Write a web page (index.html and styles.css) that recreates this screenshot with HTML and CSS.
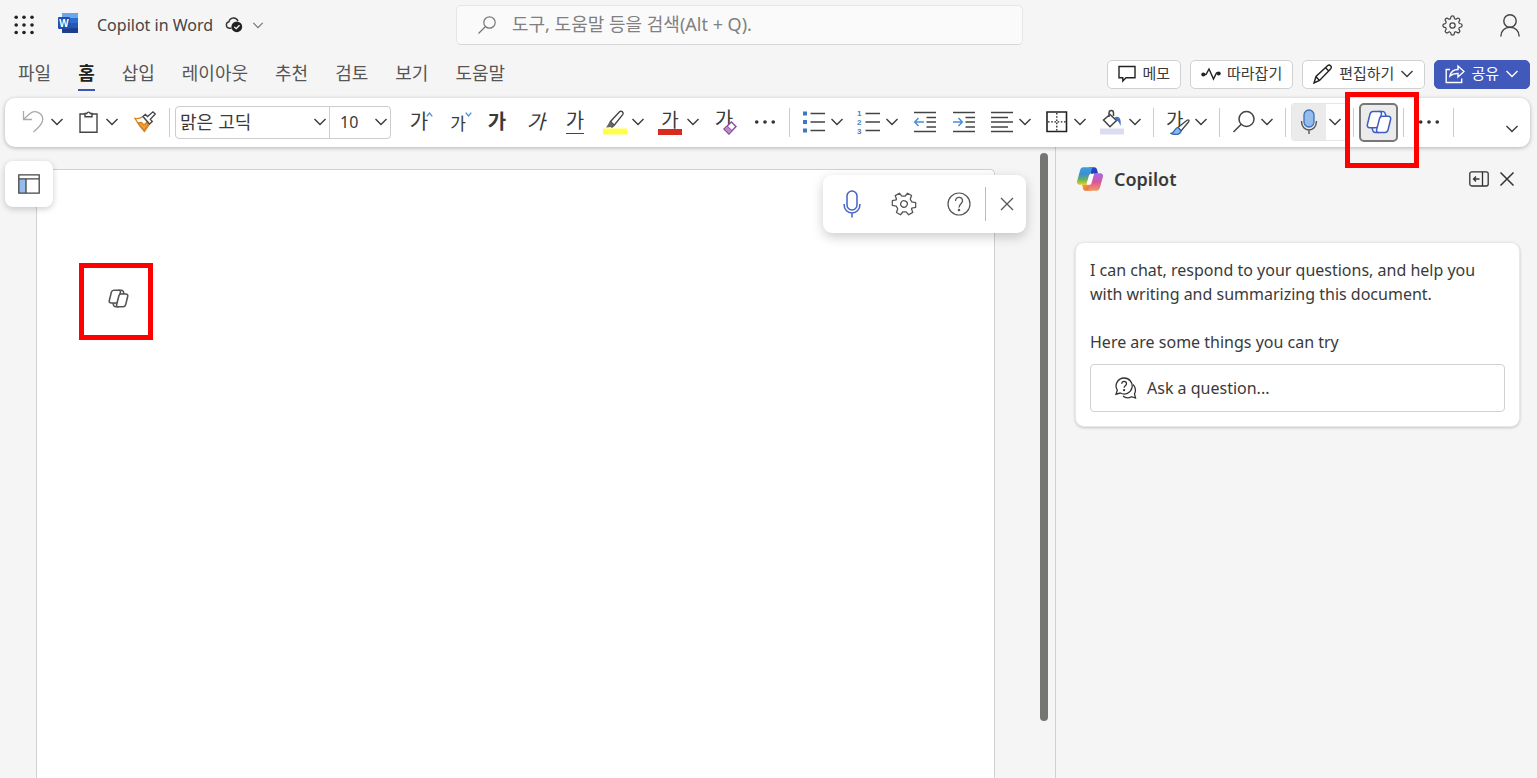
FILE: index.html
```html
<!DOCTYPE html>
<html lang="ko">
<head>
<meta charset="utf-8">
<title>Copilot in Word</title>
<link rel="stylesheet" href="styles.css">
</head>
<body>
<svg class="defs" aria-hidden="true">
  <defs>
    <symbol id="chev" viewBox="0 0 14 10"><path d="M1.500 2 7 7.500 12.500 2" fill="none" stroke="currentColor" stroke-width="1.400"/></symbol>
    <symbol id="dots" viewBox="0 0 24 24"><g fill="#333"><circle cx="3" cy="12" r="2"/><circle cx="12" cy="12" r="2"/><circle cx="21" cy="12" r="2"/></g></symbol>
    <symbol id="copilot" viewBox="0 0 26 24">
      <path class="fold" d="M13.500 1.500h3.300c1.300 0 2 .8 2.400 2l.8 3-6.500 1z"/>
      <path class="fold" d="M12.500 22.500H9.200c-1.300 0-2-.8-2.400-2l-.8-3 6.500-1z"/>
      <path class="leaf" d="M7 1.500h6.500c1.700 0 2.300 1 1.900 2.600l-2.900 11.300c-.4 1.500-1.300 2.300-2.800 2.300H3.800c-2 0-2.900-1.300-2.400-3.200L4 4c.5-1.700 1.500-2.500 3-2.500z"/>
      <path class="leaf" d="M19 22.500h-6.500c-1.700 0-2.300-1-1.900-2.600l2.900-11.300c.4-1.500 1.300-2.300 2.800-2.300h5.900c2 0 2.900 1.300 2.400 3.200L22 20c-.5 1.700-1.500 2.500-3 2.500z"/>
    </symbol>
    <linearGradient id="cg1" x1="0" y1="0" x2="0" y2="1"><stop offset="0" stop-color="#3aa0e0"/><stop offset=".4" stop-color="#3c8fcf"/><stop offset=".72" stop-color="#6db357"/><stop offset="1" stop-color="#e8cf2c"/></linearGradient>
    <linearGradient id="cg2" x1="0" y1="0" x2="0" y2="1"><stop offset="0" stop-color="#a56be8"/><stop offset=".5" stop-color="#d9569f"/><stop offset="1" stop-color="#f59a5a"/></linearGradient>
    <linearGradient id="cg3" x1="0" y1="0" x2="1" y2="1"><stop offset="0" stop-color="#2a4fd0"/><stop offset="1" stop-color="#2536b0"/></linearGradient>
    <linearGradient id="cg4" x1="0" y1="0" x2="1" y2="1"><stop offset="0" stop-color="#f2b33a"/><stop offset="1" stop-color="#e8603c"/></linearGradient>
  </defs>
</svg>

<header class="titlebar">
  <div class="title-left">
    <button class="plain" aria-label="앱 시작 관리자"><svg width="20" height="20" viewBox="0 0 20 20"><g fill="#222"><circle cx="2.200" cy="2.200" r="1.800"/><circle cx="10" cy="2.200" r="1.800"/><circle cx="18" cy="2.200" r="1.800"/><circle cx="2.200" cy="10" r="1.800"/><circle cx="10" cy="10" r="1.800"/><circle cx="18" cy="10" r="1.800"/><circle cx="2.200" cy="17.500" r="1.800"/><circle cx="10" cy="17.500" r="1.800"/><circle cx="18" cy="17.500" r="1.800"/></g></svg></button>
    <svg class="word-logo" width="20" height="20" viewBox="0 0 20 20"><rect x="4" width="16" height="20" rx="1" fill="#2b6cd0"/><path d="M4 1a1 1 0 0 1 1-1h14a1 1 0 0 1 1 1v4H4z" fill="#6aa5ee"/><path d="M4 10h16v5H4z" fill="#2557b5"/><path d="M4 15h16v4a1 1 0 0 1-1 1H5a1 1 0 0 1-1-1z" fill="#1c3e8c"/><rect y="4" width="12" height="12" rx="1" fill="#2450a8"/><text x="6" y="14" text-anchor="middle" class="word-w">W</text></svg>
    <h1 class="doc-name">Copilot in Word</h1>
    <svg width="18" height="16" viewBox="0 0 18 16"><path d="M6.500 11.200H4.200a3.300 3.300 0 0 1-.2-6.500 4.700 4.700 0 0 1 9-.7" fill="none" stroke="#333" stroke-width="1.400"/><circle cx="11.800" cy="9.800" r="5.400" fill="#222"/><path d="m9.300 9.900 1.900 1.800 3.300-3.500" fill="none" stroke="#fff" stroke-width="1.300"/></svg>
    <button class="plain title-chev" aria-label="문서 메뉴"><svg width="12" height="9"><use href="#chev"/></svg></button>
  </div>
  <label class="search">
    <svg width="18" height="18" viewBox="0 0 18 18" fill="none" stroke="#777" stroke-width="1.200"><circle cx="11.500" cy="6.500" r="5.700"/><path d="m7.500 10.500-7 7"/></svg>
    <input type="text" placeholder="도구, 도움말 등을 검색(Alt + Q)." aria-label="검색">
  </label>
  <div class="title-right">
    <button class="plain" aria-label="설정"><svg width="21" height="21" viewBox="0 0 24 24" fill="none" stroke="#444" stroke-width="1.400"><circle cx="12" cy="12" r="3"/><path d="M19.400 15a1.650 1.650 0 0 0 .33 1.820l.06.06a2 2 0 0 1-2.830 2.830l-.06-.06a1.650 1.650 0 0 0-1.820-.33 1.650 1.650 0 0 0-1 1.510V21a2 2 0 0 1-4 0v-.09A1.650 1.650 0 0 0 9 19.400a1.650 1.650 0 0 0-1.820.33l-.06.06a2 2 0 0 1-2.830-2.830l.06-.06a1.650 1.650 0 0 0 .33-1.820 1.650 1.650 0 0 0-1.510-1H3a2 2 0 0 1 0-4h.09A1.650 1.650 0 0 0 4.600 9a1.650 1.650 0 0 0-.33-1.820l-.06-.06a2 2 0 0 1 2.830-2.830l.06.06a1.650 1.650 0 0 0 1.820.33H9a1.650 1.650 0 0 0 1-1.510V3a2 2 0 0 1 4 0v.09a1.650 1.650 0 0 0 1 1.510 1.650 1.650 0 0 0 1.820-.33l.06-.06a2 2 0 0 1 2.830 2.830l-.06.06a1.650 1.650 0 0 0-.33 1.820V9a1.650 1.650 0 0 0 1.510 1H21a2 2 0 0 1 0 4h-.09a1.650 1.650 0 0 0-1.510 1z"/></svg></button>
    <button class="plain" aria-label="계정"><svg width="20" height="23" viewBox="0 0 20 23" fill="none" stroke="#444" stroke-width="1.400"><circle cx="10" cy="7" r="6.200"/><path d="M.8 22.500c0-5.500 4-9.200 9.200-9.200s9.200 3.700 9.200 9.200"/></svg></button>
  </div>
</header>

<div class="tabrow">
  <nav class="tabs">
    <a href="#">파일</a><a href="#" class="active">홈</a><a href="#">삽입</a><a href="#">레이아웃</a><a href="#">추천</a><a href="#">검토</a><a href="#">보기</a><a href="#">도움말</a>
  </nav>
  <div class="actions">
    <button class="action"><svg width="18" height="18" viewBox="0 0 18 18"><path d="M1 1.500h16v11.200H8L4.800 16v-3.300H1z" fill="none" stroke="#222" stroke-width="1.400"/></svg><span>메모</span></button>
    <button class="action"><svg width="20" height="14" viewBox="0 0 20 14"><path d="M2 7.500h3L8 2l4.500 10L15.500 6H18" fill="none" stroke="#222" stroke-width="1.400"/><circle cx="2.300" cy="7.500" r="2" fill="#222"/><circle cx="17.700" cy="6.500" r="2" fill="#222"/></svg><span>따라잡기</span></button>
    <button class="action"><svg width="20" height="20" viewBox="0 0 20 20" fill="none" stroke="#222" stroke-width="1.400"><path d="m1 19 2-6.500L14.500 1.800c1-.9 2.200-.9 3.100 0s.9 2.100 0 3.100L6.500 16.500zM12.500 3.700l3.300 3.400M3 12.700l3.500 3.700"/></svg><span>편집하기</span><svg width="14" height="10"><use href="#chev"/></svg></button>
    <button class="action share"><svg width="20" height="20" viewBox="0 0 20 20" fill="none" stroke="#fff" stroke-width="1.400"><path d="M5 5.500H1.200v13h15.500v-4M5 12c.8-4 3.500-6.500 8-6.500V2l6 5.500-6 5.500V9.500c-3.500-.2-6 .7-8 2.500z"/></svg><span>공유</span><svg width="14" height="10"><use href="#chev"/></svg></button>
  </div>
</div>

<div class="ribbon">
  <button class="split" aria-label="실행 취소"><svg width="24" height="24" viewBox="0 0 24 24"><path d="M1.500 1v8.500H10M1.700 9.300 8 3.500c5-4.200 14.500 0 12.300 8C19.500 14.500 15 19 11.500 22" fill="none" stroke="#aaa" stroke-width="1.300"/></svg><svg width="14" height="10"><use href="#chev"/></svg></button>
  <button class="split" aria-label="붙여넣기"><svg width="24" height="24" viewBox="0 0 24 24" fill="none" stroke="#444" stroke-width="1.400"><path d="M8 4H3v18.300h17V4h-5"/><path d="M8 6.800V3.500h1.800a1.800 1.800 0 0 1 3.500 0H15v3.300z"/></svg><svg width="14" height="10"><use href="#chev"/></svg></button>
  <button class="tool" aria-label="서식 복사"><svg width="24" height="24" viewBox="0 0 24 24" fill="none" stroke-width="1.300"><path d="M2 8.500c3.500.8 5.500-.2 8-2l6.500 7.500L11.500 21.500C8 18 4.500 13 2 8.500z" stroke="#d5821f" fill="#fff"/><path d="m5 13 3.500-.6L11 15l2.500-2.500 1.500 2-4 6z" fill="#efa23c" stroke="#d5821f"/><path d="m10 6.500 2.300-2.200 2.200 2.200L20 1.800 22.300 4l-5 5.300 2 2.200-2.800 2.500z" stroke="#444" fill="#fff"/></svg></button>
  <span class="sep"></span>
  <div class="combo">
    <label class="pick font"><select aria-label="글꼴"><option>맑은 고딕</option></select><svg width="14" height="10"><use href="#chev"/></svg></label>
    <label class="pick size"><select aria-label="글꼴 크기"><option>10</option></select><svg width="14" height="10"><use href="#chev"/></svg></label>
  </div>
  <button class="tool glyph" aria-label="글꼴 크게"><span>가</span><svg class="caret" width="7" height="5" viewBox="0 0 7 5"><path d="M.7 4.300 3.500 1l2.800 3.300" fill="none" stroke="#4a8fd8" stroke-width="1.300"/></svg></button>
  <button class="tool glyph small" aria-label="글꼴 작게"><span>가</span><svg class="caret" width="7" height="5" viewBox="0 0 7 5"><path d="M.7.700 3.500 4 6.300.7" fill="none" stroke="#4a8fd8" stroke-width="1.300"/></svg></button>
  <button class="tool glyph bold" aria-label="굵게">가</button>
  <button class="tool glyph" aria-label="기울임꼴"><i>가</i></button>
  <button class="tool glyph" aria-label="밑줄"><span class="under">가</span></button>
  <button class="split" aria-label="강조 색"><svg width="24" height="26" viewBox="0 0 24 26"><path d="m7.500 12.500 9-9.700c2-1.700 4.700.7 3.200 2.900l-8.500 10.500zM7.500 12.500l-1.300 3L9 18l2.200-1.800" fill="none" stroke="#444" stroke-width="1.400"/><path d="m7 12.500 4.300 3.800L9 18l-6 .5z" fill="#666"/><path d="M0 19.500h24v6H0z" fill="#ffff4a"/></svg><svg width="14" height="10"><use href="#chev"/></svg></button>
  <button class="split" aria-label="글꼴 색"><span class="fontcolor">가</span><svg width="14" height="10"><use href="#chev"/></svg></button>
  <button class="tool glyph clear" aria-label="서식 지우기"><span>가</span><svg class="eraser" width="14" height="14" viewBox="0 0 14 14"><path d="M8.500 1 13 5.500l-7 7.500-5-5z" fill="#fff" stroke="#8a4a9e" stroke-width="1.400"/><path d="m4 4.800 5.200 5L6 13 1 8z" fill="#b98ac6" stroke="#8a4a9e"/></svg></button>
  <button class="tool" aria-label="더 보기"><svg width="22" height="22"><use href="#dots"/></svg></button>
  <span class="sep"></span>
  <button class="split" aria-label="글머리 기호"><svg width="24" height="24" viewBox="0 0 24 24"><path d="M8.500 3.500H23M8.500 12H23M8.500 20.500H23" stroke="#444" stroke-width="1.500"/><path d="M1 1.500h4v4H1zM1 10h4v4H1zM1 18.500h4v4H1z" fill="#3f78c0"/></svg><svg width="14" height="10"><use href="#chev"/></svg></button>
  <button class="split" aria-label="번호 매기기"><svg class="numbered" width="24" height="24" viewBox="0 0 24 24"><path d="M8.500 3.500H23M8.500 12H23M8.500 20.500H23" stroke="#444" stroke-width="1.500"/><g class="nums"><text x="0" y="6">1</text><text x="0" y="15">2</text><text x="0" y="24">3</text></g></svg><svg width="14" height="10"><use href="#chev"/></svg></button>
  <button class="tool" aria-label="내어쓰기"><svg width="24" height="24" viewBox="0 0 24 24" fill="none" stroke="#444" stroke-width="1.500"><path d="M1 2.500h22M13.500 7.500H23M13.500 12H23M13.500 17H23M1 21.500h22"/><path d="M11 12H2M5.500 8 1.700 12l3.800 4" stroke="#4a90d9"/></svg></button>
  <button class="tool" aria-label="들여쓰기"><svg width="24" height="24" viewBox="0 0 24 24" fill="none" stroke="#444" stroke-width="1.500"><path d="M1 2.500h22M13.500 7.500H23M13.500 12H23M13.500 17H23M1 21.500h22"/><path d="M1 12h9M6.500 8l3.800 4-3.800 4" stroke="#4a90d9"/></svg></button>
  <button class="split" aria-label="맞춤"><svg width="24" height="24" viewBox="0 0 24 24"><path d="M1 2.500h22M1 7.500h17M1 12h22M1 17h17M1 21.500h22" stroke="#444" stroke-width="1.500"/></svg><svg width="14" height="10"><use href="#chev"/></svg></button>
  <button class="split" aria-label="테두리"><svg width="24" height="24" viewBox="0 0 24 24" fill="none" stroke="#222"><path d="M2 2h19.500v19.500H2z" stroke-width="1.600"/><path d="M3 11.800h18M11.800 3v18" stroke-width="1.300" stroke-dasharray="1.600 1.600"/></svg><svg width="14" height="10"><use href="#chev"/></svg></button>
  <button class="split" aria-label="음영"><svg width="24" height="26" viewBox="0 0 24 26"><path d="M0 19.500h24v6H0z" fill="#dcdcf0"/><path d="M9 8V4c0-3.500 4.500-3.500 4.500 0v3M10 5.500l6.500 6-6.500 6.300L3.500 11z" fill="none" stroke="#444" stroke-width="1.500"/><path d="M14.500 8.500c4-2.200 7.300 1 6 8.500-1.300-3.300-2-5-4-5.500z" fill="#3f72c8"/></svg><svg width="14" height="10"><use href="#chev"/></svg></button>
  <span class="sep"></span>
  <button class="split" aria-label="스타일"><span class="style-glyph">가<svg class="brush" width="20" height="16" viewBox="0 0 20 16"><path d="m8 8.500 9-7.300c1.500-.8 2.700.3 1.500 1.800L11 12z" fill="#fff" stroke="#444" stroke-width="1.300"/><path d="M8 8.300c-3 0-2.500 4.700-7 6 4 2 9.500 1.500 10-2.300z" fill="#8db8e8" stroke="#2e69b5" stroke-width="1.300"/></svg></span><svg width="14" height="10"><use href="#chev"/></svg></button>
  <span class="sep"></span>
  <button class="split" aria-label="찾기"><svg width="24" height="24" viewBox="0 0 24 24" fill="none" stroke="#444" stroke-width="1.500"><circle cx="14.500" cy="9" r="7.500"/><path d="M9.200 14.300 1.500 22"/></svg><svg width="14" height="10"><use href="#chev"/></svg></button>
  <span class="sep"></span>
  <div class="mic-split">
    <button class="mic" aria-label="받아쓰기"><svg width="18" height="26" viewBox="0 0 18 26"><rect x="4" y="1" width="10" height="17" rx="5" fill="#94bdec" stroke="#3f6fb8" stroke-width="1.300"/><path d="M1.500 12c0 12 15 12 15 0M9 21v4" fill="none" stroke="#555" stroke-width="1.400"/></svg></button>
    <button class="mic-more" aria-label="받아쓰기 옵션"><svg width="14" height="10"><use href="#chev"/></svg></button>
  </div>
  <span class="sep"></span>
  <div class="copilot-slot">
    <button class="copilot-btn" aria-label="Copilot"><svg width="26" height="24"><use href="#copilot"/></svg></button>
    <span class="marker"></span>
  </div>
  <span class="sep"></span>
  <button class="tool" aria-label="기타 옵션"><svg width="22" height="22"><use href="#dots"/></svg></button>
  <span class="sep"></span>
  <button class="plain collapse" aria-label="리본 축소"><svg width="14" height="10"><use href="#chev"/></svg></button>
</div>

<main class="workspace">
  <section class="canvas">
    <button class="nav-toggle" aria-label="탐색"><svg width="22" height="20" viewBox="0 0 22 20"><path d="M1 1h20v18H1z" fill="#fff"/><path d="M1 5h7v14H1z" fill="#94bdec"/><path d="M.8.800h20.400v18.400H.8zM1 4.800h20M8 5v14" fill="none" stroke="#444" stroke-width="1.300"/></svg></button>
    <article class="page">
      <div class="prompt"><svg width="21" height="19"><use href="#copilot"/></svg></div>
    </article>
    <div class="scroll-thumb"></div>
    <div class="dictation">
      <button class="plain" aria-label="마이크"><svg width="18" height="28" viewBox="0 0 18 28" fill="none" stroke="#4461c8" stroke-width="1.500"><rect x="4" y="1" width="10" height="19" rx="5"/><path d="M1 14c0 12 16 12 16 0M9 23v4.500"/></svg></button>
      <button class="plain" aria-label="받아쓰기 설정"><svg width="28" height="28" viewBox="0 0 24 24" fill="none" stroke="#555" stroke-width="1.100"><g transform="rotate(30 12 12)"><circle cx="12" cy="12" r="2.800"/><path d="M10 2.500h4l.6 3.300 2.300 1.300 3.200-1.100 2 3.500-2.500 2.200v.6l2.500 2.200-2 3.500-3.200-1.100-2.300 1.300-.6 3.300h-4l-.6-3.300-2.300-1.300L3.900 18l-2-3.500 2.500-2.200v-.6L1.900 9.500l2-3.500 3.200 1.100 2.300-1.300z" stroke-linejoin="round"/></g></svg></button>
      <button class="plain" aria-label="도움말"><svg width="24" height="24" viewBox="0 0 24 24" fill="none" stroke="#555" stroke-width="1.200"><circle cx="12" cy="12" r="11"/><path d="M8.500 9c0-4.800 7-4.800 7 0 0 2.700-3.500 3-3.500 6.500" stroke-width="1.300"/><circle cx="12" cy="18" r=".7" fill="#555"/></svg></button>
      <span class="dict-sep"></span>
      <button class="plain" aria-label="닫기"><svg width="14" height="14" viewBox="0 0 14 14"><path d="m1 1 12 12M13 1 1 13" stroke="#555" stroke-width="1.300"/></svg></button>
    </div>
  </section>

  <aside class="pane">
    <div class="pane-head">
      <svg width="28" height="26" viewBox="0 0 26 24"><path d="M12 1h5c1.300 0 2 .8 2.400 2l1 3.700-6 2z" fill="url(#cg3)"/><path d="M14 23H9c-1.300 0-2-.8-2.400-2l-1-3.700 6-2z" fill="url(#cg4)"/><path d="M6.800 1H15l-3.500 13.700c-.4 1.700-1.300 2.600-2.800 2.600H3.500c-2 0-3-1.300-2.500-3.200L3.800 3.800C4.300 1.900 5.300 1 6.800 1z" fill="url(#cg1)"/><path d="M19.200 23H11l3.500-13.700c.4-1.700 1.300-2.600 2.800-2.600h5.200c2 0 3 1.300 2.500 3.200l-2.800 10.300c-.5 1.900-1.500 2.800-3 2.800z" fill="url(#cg2)"/><path d="M14.500 7.200h2.300l-2.300 8.200c-.4 1.300-1 1.900-2.100 1.900h-2.900l2.300-7.800c.5-1.600 1.300-2.300 2.700-2.300z" fill="#fff"/></svg>
      <h2>Copilot</h2>
      <button class="plain" aria-label="창 확장"><svg width="20" height="16" viewBox="0 0 20 16" fill="none" stroke="#333" stroke-width="1.300"><rect x=".8" y=".8" width="18.400" height="14.200" rx="2"/><path d="M13.500 1v14M10.500 8H5M7 5.500 4.500 8 7 10.500"/></svg></button>
      <button class="plain" aria-label="닫기"><svg width="16" height="16" viewBox="0 0 16 16"><path d="m1.500 1.500 13 13M14.500 1.500l-13 13" stroke="#333" stroke-width="1.500"/></svg></button>
    </div>
    <div class="card">
      <p>I can chat, respond to your questions, and help you with writing and summarizing this document.</p>
      <p>Here are some things you can try</p>
      <button class="ask"><svg width="22" height="22" viewBox="0 0 22 22" fill="none" stroke="#333" stroke-width="1.300"><path d="M9 1a8 8 0 1 1-3.700 15L1 17.200l1.300-4A8 8 0 0 1 9 1z"/><path d="M6.700 6.800c0-3.300 4.800-3.300 4.800 0 0 1.900-2.400 2-2.400 4"/><circle cx="9.100" cy="13.200" r=".5"/><path d="M8 19c2.500 2.200 6 2.200 8.500.7l4 1.300-1-4.200c1.700-3 1-7-1.500-9.300"/></svg>Ask a question...</button>
    </div>
  </aside>
</main>
</body>
</html>
```
FILE: styles.css
```css
* { box-sizing: border-box; }

body {
  margin: 0;
  height: 100vh;
  display: flex;
  flex-direction: column;
  overflow: hidden;
  background: #f5f5f5;
  color: #3a3a3a;
  font-family: "Noto Sans", "Noto Sans CJK KR", sans-serif;
  font-size: 16px;
}

.defs { position: absolute; width: 0; height: 0; }

button, input, select { font-family: inherit; color: inherit; }
button { cursor: pointer; }
svg { display: block; flex: none; }

.plain {
  display: flex;
  padding: 0;
  border: 0;
  background: none;
}

/* Title bar */
.titlebar {
  display: grid;
  grid-template-columns: 456px minmax(0, 567px) 1fr;
  align-items: center;
  height: 50px;
}
.title-left { display: flex; align-items: center; padding-left: 14px; }
.word-logo { margin-left: 24px; margin-bottom: 4px; }
.word-w { font: bold 10px "Liberation Sans", sans-serif; fill: #fff; }
.doc-name { margin: 0 12px 0 19px; font-size: 16px; font-weight: 400; color: #444; }
.title-chev { margin-left: 9px; color: #777; }
.search {
  display: flex;
  align-items: center;
  gap: 16px;
  height: 40px;
  padding: 0 21px;
  border: 1px solid #e6e6e6;
  border-bottom-color: #d6d6d6;
  border-radius: 5px;
  background: #fafafa;
}
.search input {
  flex: 1;
  min-width: 0;
  padding: 0 0 2px;
  border: 0;
  outline: 0;
  background: none;
  font-size: 18px;
}
.search input::placeholder { color: #808080; opacity: 1; }
.title-right { display: flex; justify-content: flex-end; align-items: center; gap: 37px; padding-right: 17px; }

/* Tabs and document actions */
.tabrow {
  display: flex;
  justify-content: space-between;
  align-items: center;
  height: 48px;
  padding: 0 7px 0 18px;
}
.tabs { display: flex; gap: 27px; }
.tabs a {
  height: 34px;
  border-bottom: 2px solid transparent;
  color: #555;
  font-family: "Noto Sans CJK KR", sans-serif;
  font-size: 18px;
  line-height: 30px;
  text-decoration: none;
}
.tabs .active { border-color: #3d55b5; color: #222; font-weight: 700; }
.actions { display: flex; gap: 9px; }
.action {
  display: flex;
  align-items: center;
  gap: 6px;
  height: 29px;
  padding: 0 10px;
  border: 1px solid #d1d1d1;
  border-radius: 5px;
  background: #fff;
  font-family: "Noto Sans CJK KR", sans-serif;
  font-size: 15px;
}
.action span { padding-bottom: 3px; }
.share { border-color: #4059bb; background: #4059bb; color: #fff; }

/* Ribbon */
.ribbon {
  display: flex;
  align-items: center;
  height: 49px;
  margin: 0 7px 0 5px;
  padding: 0 11px 1px 10px;
  border-radius: 10px;
  background: #fff;
  box-shadow: 0 1px 4px rgba(0, 0, 0, .28);
  position: relative;
  z-index: 2;
}
.tool, .split {
  display: flex;
  flex: none;
  align-items: center;
  height: 38px;
  padding: 0;
  border: 0;
  background: none;
  position: relative;
}
.tool { justify-content: center; width: 39px; }
.split { width: 55px; gap: 4px; padding-left: 7px; }
.glyph {
  padding-bottom: 4px;
  font-family: "Noto Sans CJK KR", sans-serif;
  font-size: 20px;
}
.tool.glyph { padding-right: 3px; }
.small { padding-bottom: 0; font-size: 17px; }
.bold { font-weight: 700; }
.under { border-bottom: 1px solid #444; line-height: 26px; }
.caret { position: absolute; top: 9px; right: 7px; }
.eraser { position: absolute; bottom: 6px; right: 8px; }
.clear { padding-bottom: 7px; }
.fontcolor {
  width: 24px;
  border-bottom: 6px solid #d92b1c;
  font-family: "Noto Sans CJK KR", sans-serif;
  font-size: 19px;
  line-height: 20px;
  text-align: center;
}
.style-glyph {
  position: relative;
  width: 24px;
  height: 26px;
  font-family: "Noto Sans CJK KR", sans-serif;
  font-size: 19px;
  line-height: 20px;
  text-align: left;
}
.brush { position: absolute; right: 0; bottom: 0; }
.numbered { overflow: visible; }
.nums { font: bold 8px "Liberation Sans", sans-serif; fill: #4a80d0; }
.sep { flex: none; width: 1px; height: 29px; margin: 0 5px; background: #ccc; }

.combo {
  display: flex;
  width: 216px;
  height: 33px;
  margin-right: 10px;
  border: 1px solid #ccc;
  border-radius: 4px;
}
.pick { display: grid; align-items: center; }
.pick select, .pick svg { grid-area: 1 / 1; }
.pick select {
  width: 100%;
  height: 100%;
  padding: 0 4px;
  border: 0;
  outline: 0;
  background: none;
  appearance: none;
}
.pick svg { justify-self: end; margin-right: 2px; pointer-events: none; }
.font { flex: 1; }
.font select { padding-bottom: 3px; font-family: "Noto Sans CJK KR", sans-serif; font-size: 18px; }
.size { width: 61px; border-left: 1px solid #ccc; }
.size select { padding-left: 10px; font-size: 16px; }

.mic-split { display: flex; width: 57px; height: 38px; border: 1px solid #e6e6e6; border-right: 0; border-radius: 4px; }
.mic { display: flex; align-items: center; justify-content: center; width: 34px; padding: 0; border: 0; background: #ebebeb; }
.mic-more { display: flex; align-items: center; padding: 0 0 0 2px; border: 0; background: none; }

.copilot-slot { position: relative; }
.copilot-btn {
  display: flex;
  align-items: center;
  justify-content: center;
  width: 39px;
  height: 39px;
  padding: 0;
  border: 2px solid #777;
  border-radius: 5px;
  background: #ebebeb;
  color: #3f5bc4;
}
.copilot-btn svg { fill: #fff; stroke: #3f5bc4; stroke-width: 1.5px; }
.marker {
  position: absolute;
  top: -11px;
  left: -14px;
  width: 74px;
  height: 76px;
  border: 5px solid #f00;
  pointer-events: none;
}
.collapse { margin-left: auto; margin-top: 14px; }

/* Workspace */
.workspace { display: flex; flex: 1; min-height: 0; }
.canvas { position: relative; display: flex; flex: 1; min-width: 0; padding: 0 7px 0 36px; }
.nav-toggle {
  position: absolute;
  top: 14px;
  left: 5px;
  display: flex;
  align-items: center;
  justify-content: center;
  width: 48px;
  height: 46px;
  padding: 0;
  border: 0;
  border-radius: 8px;
  background: #fff;
  box-shadow: 0 2px 6px rgba(0, 0, 0, .2);
}
.page {
  flex: 1;
  margin: 22px 45px 0 0;
  padding: 93px 42px;
  border: 1px solid #d1d1d1;
  border-bottom: 0;
  border-radius: 0 5px 0 0;
  background: #fff;
}
.prompt {
  display: flex;
  align-items: center;
  justify-content: center;
  width: 74px;
  height: 77px;
  padding: 0 0 6px 4px;
  border: 5px solid #f00;
}
.prompt svg { fill: #fff; stroke: #555; stroke-width: 2px; }
.scroll-thumb { width: 8px; height: 90%; margin-top: 6px; border-radius: 4px; background: #757573; }
.dictation {
  position: absolute;
  top: 28px;
  right: 29px;
  display: flex;
  align-items: center;
  height: 58px;
  padding: 0 12px 0 20px;
  border-radius: 9px;
  background: #fff;
  box-shadow: 0 4px 12px rgba(0, 0, 0, .2);
  gap: 29px;
}
.dict-sep { width: 1px; height: 34px; margin: 0 -15px; background: #bbb; }

/* Copilot pane */
.pane { width: 482px; padding: 18px 17px 0 19px; border-left: 1px solid #d1d1d1; }
.pane-head { display: flex; align-items: center; gap: 10px; height: 28px; padding: 0 5px 0 1px; }
.pane-head h2 { flex: 1; margin: 0; font-size: 18px; font-weight: 600; }
.card {
  margin-top: 49px;
  padding: 15px 14px 14px;
  border: 1px solid #e8e8e8;
  border-radius: 9px;
  background: #fff;
  box-shadow: 0 1px 3px rgba(0, 0, 0, .2);
}
.card p { margin: 0 0 24px; line-height: 24px; }
.card p + p { margin-bottom: 10px; }
.ask {
  display: flex;
  align-items: center;
  gap: 10px;
  width: 100%;
  height: 48px;
  padding: 0 24px;
  border: 1px solid #d1d1d1;
  border-radius: 4px;
  background: #fff;
  font-size: 16px;
}
```
